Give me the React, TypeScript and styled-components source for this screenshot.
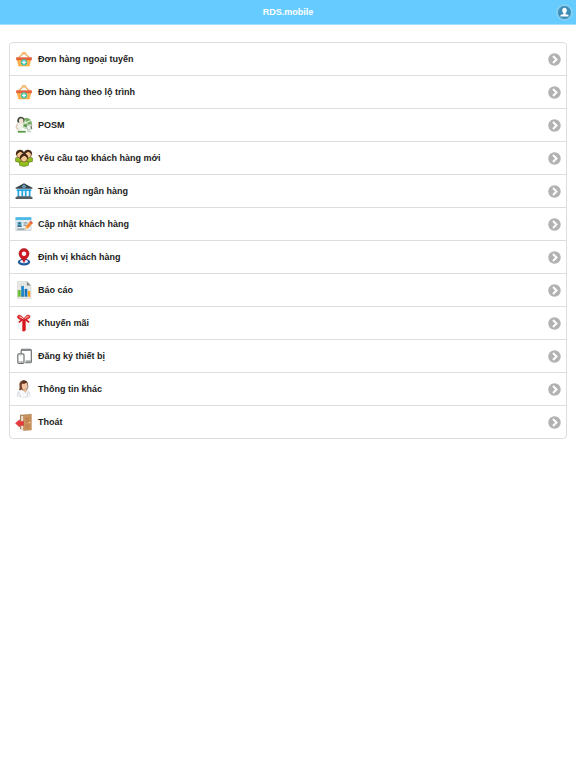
import React from "react";
import styled, { createGlobalStyle } from "styled-components";

const GlobalStyle = createGlobalStyle`
  *, *::before, *::after { box-sizing: border-box; }
  body {
    margin: 0;
    background: #fff;
    color: #222;
    font-family: "Liberation Sans", Arial, sans-serif;
    font-size: 9px;
  }
`;

const Header = styled.header`
  display: grid;
  grid-template-columns: 1fr auto 1fr;
  align-items: center;
  height: 25px;
  padding: 0 3px;
  background: #66ccff;
  border-bottom: 1px solid #a3e0ff;
`;

const Title = styled.h1`
  grid-column: 2;
  margin: 0;
  font-size: 9px;
  line-height: 12px;
  font-weight: 700;
  color: #fff;
`;

const AccountButton = styled.button`
  display: flex;
  justify-self: end;
  width: 17px;
  height: 17px;
  padding: 0;
  border: 0;
  border-radius: 50%;
  background: transparent;
  cursor: pointer;
`;

const Menu = styled.ul`
  margin: 17px 9px 0;
  padding: 0;
  list-style: none;
  border: 1px solid #ddd;
  border-radius: 4px;
`;

const Item = styled.li`
  & + & { border-top: 1px solid #ddd; }
`;

const ItemLink = styled.a`
  display: flex;
  align-items: center;
  gap: 5px;
  height: 32px;
  padding: 0 5px;
  color: #222;
  font-weight: 700;
  line-height: 12px;
  text-decoration: none;
`;

const Label = styled.span`
  flex: 1;
`;

const Picture = styled.svg`
  width: 18px;
  height: 18px;
  flex: none;
`;

const Arrow = styled.svg`
  width: 13px;
  height: 13px;
  flex: none;
`;

const Basket = () => (
  <>
    <path d="M6 14 16 5l10 9" fill="none" stroke="#e9b268" strokeWidth="2.4" />
    <path d="M12 4h8v4h-8z" fill="#f3bd6c" />
    <path d="M3 16h26l-3 13H6z" fill="#fba93f" />
    <path d="M5 21h22M6 25h20" stroke="#fdc270" strokeWidth="1.5" />
    <path d="M2 13h28v5H2z" fill="#ea603c" />
    <circle cx="16" cy="22" r="5.500" fill="#3fc1ac" />
    <path d="M16 18.500v7M12.500 22h7" stroke="#fff" strokeWidth="2.400" />
  </>
);

const Posm = () => (
  <>
    <ellipse cx="20" cy="13" rx="10" ry="10" fill="#b7d8a9" />
    <path d="M17 4c8-2 14 5 13 14l-7-3z" fill="#76aa64" />
    <path d="M17 13 28 8M18 18l11-3" stroke="#e9f4e3" strokeWidth="2" />
    <path d="M4 10C3 3 10-1 15 3c4 3 2 7-1 9l-4 2z" fill="#39493c" />
    <ellipse cx="11" cy="9" rx="4" ry="5" fill="#f5dfd0" />
    <path d="M7 13h7l5 6-3 2-4-3 1 8H2l1-9z" fill="#f4f2ea" />
    <path d="m5 12-3 8 5 5" fill="none" stroke="#dac8b6" strokeWidth="2" />
    <path d="m20 17 10-2-1 8-6 3z" fill="#eef0ed" stroke="#7f9b78" />
    <path d="M15 15h6v4h-6z" fill="#4d8d47" />
    <path d="M5 28h14" stroke="#529640" strokeWidth="3" />
    <path d="M22 28h7" stroke="#c6d0c2" strokeWidth="2" />
    <path d="m28 18 2 5" stroke="#587052" strokeWidth="2" />
  </>
);

const Person = ({ x, y }: { x: number; y: number }) => (
  <g transform={`translate(${x} ${y})`}>
    <path d="M-8 8q3-2 8-2t8 2v6q-8 4-16 0z" fill="#93bd20" stroke="#4e7409" />
    <circle r="6" cy="2" fill="#f3c692" stroke="#593719" />
    <path d="M-7 4C-11-10 11-10 7 4 6-1 3-2 0-3c-2 2-5 3-7 7z" fill="#452818" />
  </g>
);

const People = () => (
  <>
    <Person x={9} y={8} />
    <Person x={23} y={8} />
    <Person x={16} y={15} />
  </>
);

const Bank = () => (
  <>
    <path d="M1 10 16 2l15 8v2H1z" fill="#37444d" />
    <circle cx="16" cy="8" r="3" fill="#8ac8e8" />
    <path d="M16 6v4" stroke="#263e4b" strokeWidth="1.5" />
    <path d="M3 13h26v3H3z" fill="#21a3e2" />
    <path d="M6 14v12M13 14v12M19 14v12M26 14v12" stroke="#21a3e2" strokeWidth="3" />
    <path d="M3 25h26v2H3z" fill="#65727a" />
    <path d="M1 27h30v3H1z" fill="#35424b" />
  </>
);

const Form = () => (
  <>
    <path d="M1.5 4.5h27v23h-27z" fill="#e9f0f3" stroke="#aebdc5" />
    <path d="M1 4h28v5H1z" fill="#4cbae7" />
    <path d="M4 12h8v9H4z" fill="#65bde0" />
    <circle cx="8" cy="15" r="2" fill="#3f5967" />
    <path d="M4 21c0-4 8-4 8 0z" fill="#31576a" />
    <path d="M15 14h7M15 18h5M4 25h13" stroke="#81959e" strokeWidth="2" />
    <path d="m18 26 1-6 8-9 4 4-8 9z" fill="#f38b36" />
    <path d="m26 12 2-2 4 4-2 2z" fill="#de514c" />
    <path d="m18 26 1-6 4 3z" fill="#f7d39a" />
  </>
);

const Location = () => (
  <>
    <ellipse cx="16" cy="25" rx="11" ry="6" fill="#2159a0" />
    <ellipse cx="16" cy="24" rx="7" ry="3" fill="#eef3f8" />
    <path d="M16 26C14 20 7 16 7 10a9 9 0 0 1 18 0c0 6-7 10-9 16z" fill="#cf1822" stroke="#9d1822" />
    <circle cx="16" cy="10" r="4" fill="#fff" />
  </>
);

const Report = () => (
  <>
    <path d="M4.5.5h17l7 7v24h-24z" fill="#e9e9e6" stroke="#d0d1cf" />
    <path d="M21 1v7h7z" fill="#7e8888" />
    <path d="M8 5h10M8 8h8" stroke="#d0d5d4" />
    <path d="M5 16h5v12H5z" fill="#67b72e" />
    <path d="M11 20h5v8h-5z" fill="#f2b21c" />
    <path d="M11 9h5v19h-5z" fill="#2388c9" />
    <path d="M17 14h5v14h-5z" fill="#1975b5" />
    <path d="M23 18h4v10h-4z" fill="#f3a315" />
    <path d="M5 16h1v12H5" fill="#9bd569" />
  </>
);

const Gift = () => (
  <>
    <path d="M6 15h20v11l-10 4-10-4z" fill="#f9f8f6" stroke="#eae7e5" />
    <path d="M4 10h24v5H4z" fill="#fcfbfa" stroke="#eeeaea" />
    <path d="M13 10h6v19l-3 2-3-1z" fill="#d9141b" />
    <path d="M16 10C8 11 2 7 5 3c4-3 9 2 11 6 2-5 7-9 10-6 3 4-4 7-10 7z" fill="#e52a2a" stroke="#c81920" />
    <path d="m14 9-7 6m11-6 7 6" stroke="#ce171e" strokeWidth="3" />
    <path d="M8 5q4 0 6 4m4-1q3-4 6-3" fill="none" stroke="#fff" strokeWidth="1.5" />
  </>
);

const Devices = () => (
  <>
    <path d="M11 11V6q0-2 2-2h14q2 0 2 2v20q0 2-2 2h-9" fill="#fff" stroke="#66696b" strokeWidth="2" />
    <path d="M11 6h17m-9 19h9" stroke="#85898b" strokeWidth="2" />
    <rect x="5" y="12" width="11" height="17" rx="2" fill="#fff" stroke="#66696b" strokeWidth="2" />
    <path d="M6 14h9M6 26h9" stroke="#85898b" />
    <circle cx="11" cy="27" r=".8" fill="#555" />
  </>
);

const Support = () => (
  <>
    <path d="M3 29c0-8 5-12 12-12s12 4 13 12q-12 5-25 0z" fill="#d9dee3" />
    <path d="M9 4c3-6 15-3 14 5l-1 8-11 3-4-3c3-4-1-9 2-13z" fill="#77432d" />
    <ellipse cx="17" cy="10" rx="5" ry="7" fill="#f1c5a2" />
    <path d="M12 6c4 2 7 0 9-2l2 4-2-6-6-2z" fill="#593021" />
    <path d="m12 17 7 6 2-5 6 10q-11 5-22 0l3-9z" fill="#f6f8fa" />
    <path d="m13 17 6 6 2-5-2-2z" fill="#e9b993" />
    <path d="M23 9v5q0 3-4 2" fill="none" stroke="#aaa" strokeWidth="1.5" />
    <path d="m7 22 3 8m13-8-2 8" stroke="#b6bec7" />
  </>
);

const Exit = () => (
  <>
    <path d="M9 3h19v26H9z" fill="#a37a4e" />
    <path d="M11 5h5v24h-5z" fill="#f0e8da" />
    <path d="m15 4 14-2v28l-14 1z" fill="#cb935e" stroke="#b37c4a" />
    <path d="m18 8 8-1v9l-8 1zm0 12 8-1v8l-8 1z" fill="#c28752" />
    <circle cx="26" cy="17" r="1.3" fill="#f8dc91" />
    <path d="m1 18 7-6v3h7v7H8v3z" fill="#e8393d" stroke="#cf3035" />
  </>
);

const entries: { label: string; Drawing: React.ComponentType }[] = [
  { label: "Đơn hàng ngoại tuyến", Drawing: Basket },
  { label: "Đơn hàng theo lộ trình", Drawing: Basket },
  { label: "POSM", Drawing: Posm },
  { label: "Yêu cầu tạo khách hàng mới", Drawing: People },
  { label: "Tài khoản ngân hàng", Drawing: Bank },
  { label: "Cập nhật khách hàng", Drawing: Form },
  { label: "Định vị khách hàng", Drawing: Location },
  { label: "Báo cáo", Drawing: Report },
  { label: "Khuyến mãi", Drawing: Gift },
  { label: "Đăng ký thiết bị", Drawing: Devices },
  { label: "Thông tin khác", Drawing: Support },
  { label: "Thoát", Drawing: Exit },
];

export default function App() {
  return (
    <>
      <GlobalStyle />
      <Header>
        <Title>RDS.mobile</Title>
        <AccountButton aria-label="Tài khoản">
          <svg width="17" height="17" viewBox="0 0 34 34" aria-hidden="true">
            <circle cx="17" cy="17" r="15.5" fill="#7bc5eb" stroke="#8dd4f5" strokeWidth="2" />
            <circle cx="17" cy="17" r="13" fill="#3d8db7" />
            <ellipse cx="17" cy="13" rx="4.5" ry="5.5" fill="#fff" />
            <path d="M15 17h4v3l6 2v3H9v-3l6-2z" fill="#fff" />
          </svg>
        </AccountButton>
      </Header>
      <main>
        <Menu>
          {entries.map(({ label, Drawing }) => (
            <Item key={label}>
              <ItemLink href="#">
                <Picture viewBox="0 0 32 32" aria-hidden="true"><Drawing /></Picture>
                <Label>{label}</Label>
                <Arrow viewBox="0 0 26 26" aria-hidden="true">
                  <circle cx="13" cy="13" r="12.5" fill="#b2b2b2" />
                  <path d="m10 6 7 7-7 7" fill="none" stroke="#fff" strokeWidth="4" />
                </Arrow>
              </ItemLink>
            </Item>
          ))}
        </Menu>
      </main>
    </>
  );
}
